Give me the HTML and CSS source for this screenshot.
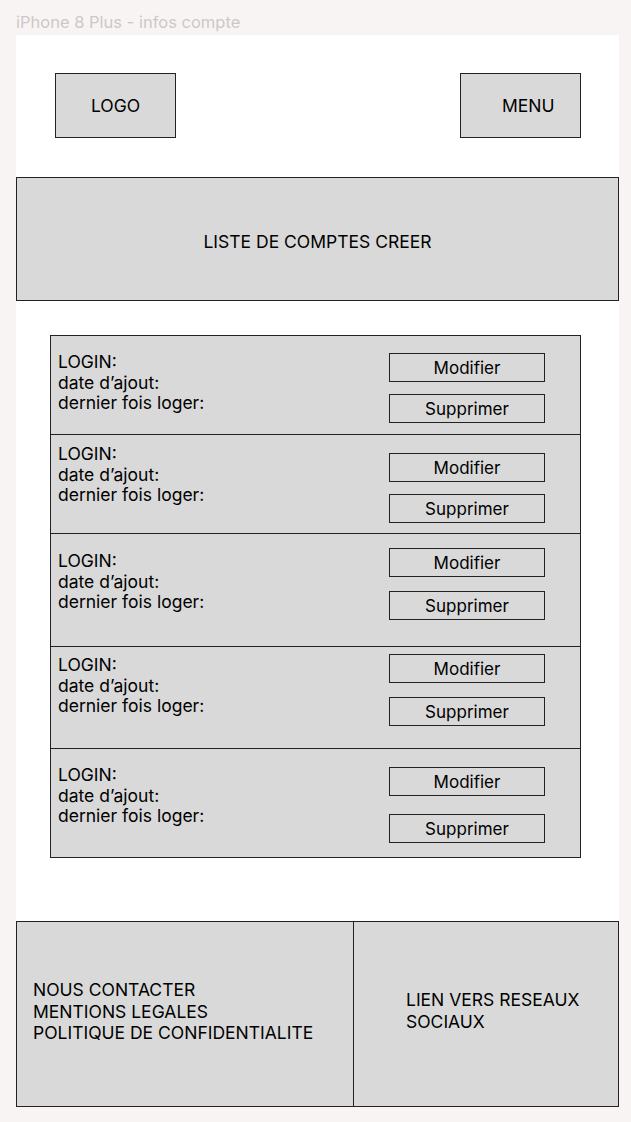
FILE: index.html
```html
<!DOCTYPE html>
<html lang="fr">
<head>
    <meta charset="UTF-8">
    <meta name="viewport" content="width=device-width, initial-scale=1.0">
    <title>iPhone 8 Plus - infos compte</title>
    <link rel="stylesheet" href="styles.css">
</head>
<body>
    <div class="frame-label">iPhone 8 Plus - infos compte</div>

    <div class="frame">
        <header class="top-bar">
            <div class="box logo">LOGO</div>
            <div class="box menu">MENU</div>
        </header>

        <section class="banner">LISTE DE COMPTES CREER</section>

        <section class="account-list">
            <div class="account-row">
                <div class="account-info">
                    <div>LOGIN:</div>
                    <div>date d’ajout:</div>
                    <div>dernier fois loger:</div>
                </div>
                <div class="account-actions">
                    <button class="action-btn">Modifier</button>
                    <button class="action-btn">Supprimer</button>
                </div>
            </div>
            <div class="account-row">
                <div class="account-info">
                    <div>LOGIN:</div>
                    <div>date d’ajout:</div>
                    <div>dernier fois loger:</div>
                </div>
                <div class="account-actions">
                    <button class="action-btn">Modifier</button>
                    <button class="action-btn">Supprimer</button>
                </div>
            </div>
            <div class="account-row">
                <div class="account-info">
                    <div>LOGIN:</div>
                    <div>date d’ajout:</div>
                    <div>dernier fois loger:</div>
                </div>
                <div class="account-actions">
                    <button class="action-btn">Modifier</button>
                    <button class="action-btn">Supprimer</button>
                </div>
            </div>
            <div class="account-row">
                <div class="account-info">
                    <div>LOGIN:</div>
                    <div>date d’ajout:</div>
                    <div>dernier fois loger:</div>
                </div>
                <div class="account-actions">
                    <button class="action-btn">Modifier</button>
                    <button class="action-btn">Supprimer</button>
                </div>
            </div>
            <div class="account-row">
                <div class="account-info">
                    <div>LOGIN:</div>
                    <div>date d’ajout:</div>
                    <div>dernier fois loger:</div>
                </div>
                <div class="account-actions">
                    <button class="action-btn">Modifier</button>
                    <button class="action-btn">Supprimer</button>
                </div>
            </div>
        </section>

        <footer class="site-footer">
            <div class="footer-cell footer-links">
                <div>NOUS CONTACTER</div>
                <div>MENTIONS LEGALES</div>
                <div>POLITIQUE DE CONFIDENTIALITE</div>
            </div>
            <div class="footer-cell footer-social">
                <div>LIEN VERS RESEAUX<br>SOCIAUX</div>
            </div>
        </footer>
    </div>
</body>
</html>
```

FILE: styles.css
```css
* {
    box-sizing: border-box;
}
body {
    margin: 0;
    background-color: #f9f4f4;
    font-family: Inter, "Noto Sans", Arial, sans-serif;
    color: #000;
}
.frame-label {
    height: 35px;
    padding: 13px 0 0 16px;
    font-size: 16.5px;
    line-height: 19px;
    color: #cdc8c8;
}
.frame {
    width: 603px;
    height: 1072px;
    margin-left: 16px;
    background-color: #fff;
    display: flex;
    flex-direction: column;
}
.box {
    background-color: #d9d9d9;
    border: 1px solid #222;
    font-size: 17.5px;
}
.top-bar {
    display: flex;
    justify-content: space-between;
    padding: 38px 38px 0 39px;
}
.logo, .menu {
    width: 121px;
    height: 65px;
    display: flex;
    align-items: center;
}
.logo {
    justify-content: center;
}
.menu {
    padding-left: 41px;
}
.banner {
    height: 124px;
    margin-top: 39px;
    background-color: #d9d9d9;
    border: 1px solid #222;
    display: flex;
    align-items: center;
    justify-content: center;
    padding-top: 4px;
    font-size: 17.5px;
}
.account-list {
    width: 531px;
    margin: 34px 0 0 34px;
    background-color: #d9d9d9;
    border: 1px solid #222;
}
.account-row {
    display: flex;
    justify-content: space-between;
    border-bottom: 1px solid #222;
    font-size: 17.5px;
    line-height: 20.5px;
}
.account-row:last-child {
    border-bottom: none;
}
.account-info {
    padding-left: 7px;
}
.account-actions {
    display: flex;
    flex-direction: column;
    margin-right: 35px;
}
.action-btn {
    width: 156px;
    height: 29px;
    padding: 0;
    background-color: #d9d9d9;
    border: 1px solid #222;
    border-radius: 0;
    font-family: inherit;
    font-size: 17px;
    line-height: 20px;
    color: #000;
}

/* the wireframe rows are not evenly spaced */
.account-row:nth-child(1) { height: 99px; }
.account-row:nth-child(1) .account-info { padding-top: 16px; }
.account-row:nth-child(1) .account-actions { padding-top: 17px; gap: 12px; }

.account-row:nth-child(2) { height: 99px; }
.account-row:nth-child(2) .account-info { padding-top: 9px; }
.account-row:nth-child(2) .account-actions { padding-top: 18px; gap: 12px; }

.account-row:nth-child(3) { height: 113px; }
.account-row:nth-child(3) .account-info { padding-top: 17px; }
.account-row:nth-child(3) .account-actions { padding-top: 14px; gap: 14px; }

.account-row:nth-child(4) { height: 102px; }
.account-row:nth-child(4) .account-info { padding-top: 8px; }
.account-row:nth-child(4) .account-actions { padding-top: 7px; gap: 14px; }

.account-row:nth-child(5) { height: 108px; }
.account-row:nth-child(5) .account-info { padding-top: 16px; }
.account-row:nth-child(5) .account-actions { padding-top: 18px; gap: 18px; }

.site-footer {
    margin-top: auto;
    height: 186px;
    display: flex;
    background-color: #d9d9d9;
    border: 1px solid #222;
    font-size: 17.5px;
    line-height: 21.5px;
}
.footer-cell {
    display: flex;
    flex-direction: column;
    justify-content: center;
    padding-bottom: 7px;
}
.footer-links {
    width: 337px;
    padding-left: 16px;
    padding-bottom: 5px;
    border-right: 1px solid #222;
}
.footer-social {
    flex: 1;
    padding-left: 52px;
}
```
